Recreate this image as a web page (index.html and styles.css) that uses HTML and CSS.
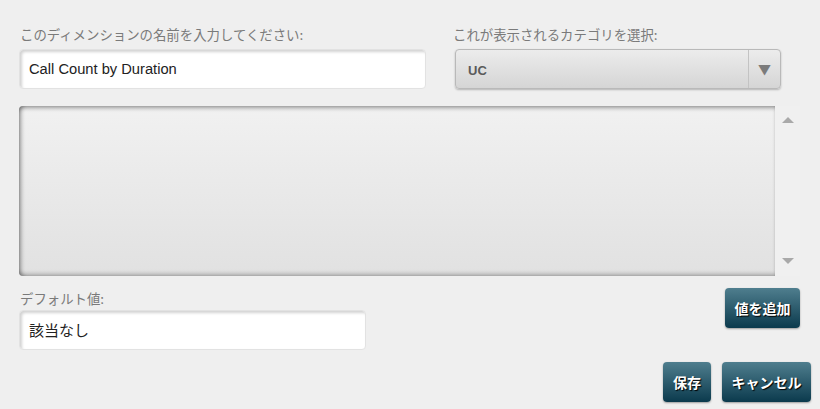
FILE: index.html
```html
<!DOCTYPE html>
<html lang="ja">
<head>
    <meta charset="UTF-8">
    <meta name="viewport" content="width=device-width, initial-scale=1.0">
    <title>ディメンションの編集</title>
    <link rel="stylesheet" href="styles.css">
</head>
<body>
    <div class="dialog">
        <div class="top-row">
            <div class="field name-field">
                <label class="label">このディメンションの名前を入力してください:</label>
                <div class="text-input name-input">Call Count by Duration</div>
            </div>
            <div class="field category-field">
                <label class="label">これが表示されるカテゴリを選択:</label>
                <div class="select">
                    <span class="select-value">UC</span>
                    <span class="select-arrow">&#9660;</span>
                </div>
            </div>
        </div>

        <div class="values">
            <div class="values-list"></div>
            <div class="scrollbar">
                <span class="scroll-up"></span>
                <span class="scroll-down"></span>
            </div>
        </div>

        <div class="bottom-row">
            <div class="field default-field">
                <label class="label">デフォルト値:</label>
                <div class="text-input default-input">該当なし</div>
            </div>
            <button class="btn add-btn">値を追加</button>
        </div>

        <div class="actions">
            <button class="btn save-btn">保存</button>
            <button class="btn cancel-btn">キャンセル</button>
        </div>
    </div>
</body>
</html>
```

FILE: styles.css
```css
body {
    margin: 0;
    background: #efefef;
    font-family: "Noto Sans CJK JP", "Liberation Sans", sans-serif;
}
.dialog {
    width: 820px;
    height: 409px;
    padding: 24px 0 0 19px;
    box-sizing: border-box;
}
.top-row {
    display: flex;
}
.label {
    display: block;
    height: 20px;
    line-height: 20px;
    font-size: 13.4px;
    color: #7a7a7a;
    padding-left: 1px;
}
.name-field {
    width: 407px;
}
.category-field {
    margin-left: 26px;
}
.text-input {
    height: 40px;
    margin-top: 5px;
    box-sizing: border-box;
    background: #fff;
    border: 1px solid #e2e2e2;
    border-radius: 4px;
    box-shadow: inset 2px 2px 3px rgba(0, 0, 0, 0.18);
    padding-left: 9px;
    line-height: 38px;
    font-size: 14px;
    color: #222;
}
.name-input {
    font-family: "Liberation Sans", Arial, sans-serif;
    font-size: 14.7px;
}
.select {
    display: flex;
    width: 326px;
    height: 40px;
    margin: 5px 0 0 3px;
    box-sizing: border-box;
    border: 1px solid #b9b9b9;
    border-radius: 4px;
    background: linear-gradient(#ececec, #d5d5d5);
    box-shadow: 0 1px 2px rgba(0, 0, 0, 0.25);
}
.select-value {
    flex: 1;
    padding: 2px 0 0 12px;
    line-height: 38px;
    font-family: "Liberation Sans", Arial, sans-serif;
    font-weight: bold;
    font-size: 13px;
    color: #5a5a5a;
}
.select-arrow {
    width: 31px;
    border-left: 1px solid #c3c3c3;
    text-align: center;
    line-height: 38px;
    font-size: 13px;
    color: #7b7b7b;
}
.values {
    display: flex;
    width: 781px;
    height: 170px;
    margin-top: 17px;
}
.values-list {
    flex: 1;
    border-radius: 4px 0 0 4px;
    background: linear-gradient(#f1f1f1, #e1e1e1);
    box-shadow: inset 0 4px 4px -2px rgba(0, 0, 0, 0.35),
                inset 4px 0 4px -2px rgba(0, 0, 0, 0.35),
                inset 0 -4px 4px -2px rgba(0, 0, 0, 0.25);
}
.scrollbar {
    width: 25px;
    background: #f0f0f0;
    display: flex;
    flex-direction: column;
    justify-content: space-between;
    align-items: center;
    padding: 11px 0 12px;
    box-sizing: border-box;
}
.scroll-up,
.scroll-down {
    width: 0;
    height: 0;
    border-left: 6px solid transparent;
    border-right: 6px solid transparent;
}
.scroll-up {
    border-bottom: 6px solid #a9a9a9;
}
.scroll-down {
    border-top: 6px solid #a9a9a9;
}
.bottom-row {
    display: flex;
    justify-content: space-between;
    align-items: flex-start;
    width: 781px;
    margin-top: 12px;
}
.default-field {
    width: 347px;
}
.default-field .text-input {
    margin-top: 2px;
    font-size: 15px;
}
.btn {
    height: 40px;
    padding: 0;
    border: none;
    border-radius: 4px;
    background: linear-gradient(#4f7e8e, #0b3a4d);
    box-shadow: 0 1px 2px rgba(0, 0, 0, 0.35);
    color: #fff;
    font-family: "Noto Sans CJK JP", sans-serif;
    font-weight: bold;
    font-size: 14px;
    text-shadow: 1px 1px 1px #000;
    cursor: pointer;
}
.add-btn {
    width: 75px;
}
.save-btn {
    width: 48px;
}
.cancel-btn {
    width: 89px;
}
.actions {
    display: flex;
    justify-content: flex-end;
    gap: 11px;
    width: 792px;
    margin-top: 12px;
}
```
